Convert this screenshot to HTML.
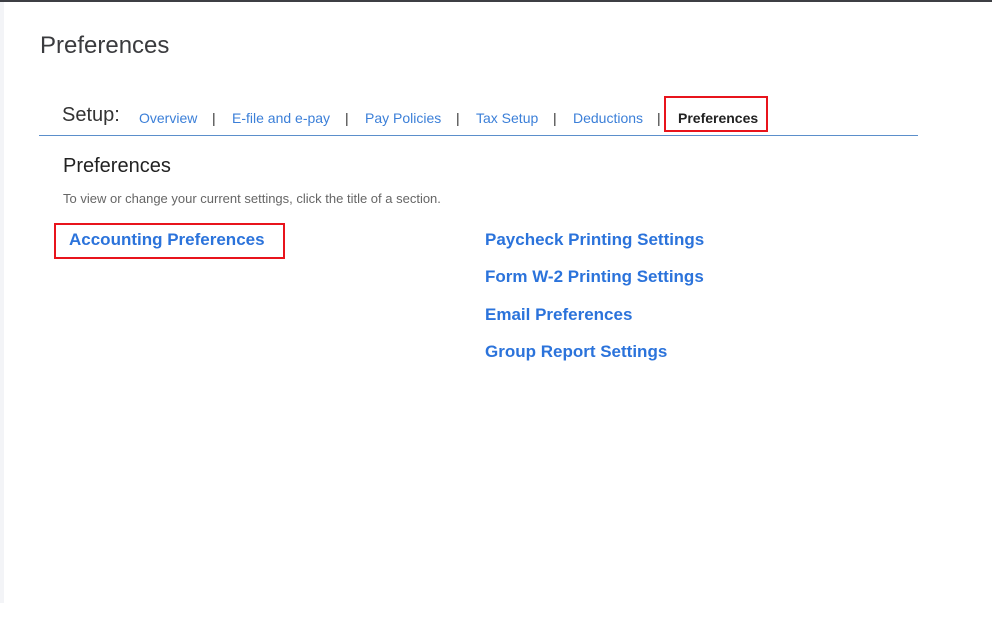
<!DOCTYPE html>
<html><head><meta charset="utf-8"><style>
body{margin:0;width:999px;height:621px;background:#fff;position:relative;overflow:hidden;font-family:"Liberation Sans",Arial,sans-serif}
.a{position:absolute;white-space:nowrap}
.nav{font-size:14px;color:#3b7fd8}
.sep{font-size:14px;color:#333}
.lk{font-size:17px;font-weight:bold;color:#2b73db}
</style></head><body>
<div class="a" style="left:0;top:0;width:992px;height:2px;background:#3d3f44"></div>
<div class="a" style="left:0;top:2px;width:4px;height:601px;background:#f3f4f7"></div>
<div class="a" style="left:40px;top:32px;font-size:24px;color:#3a3b3e">Preferences</div>
<div class="a" style="left:62px;top:104px;font-size:20px;color:#333">Setup:</div>
<div class="a nav" style="left:139px;top:110px">Overview</div>
<div class="a sep" style="left:212px;top:110px">|</div>
<div class="a nav" style="left:232px;top:110px">E-file and e-pay</div>
<div class="a sep" style="left:345px;top:110px">|</div>
<div class="a nav" style="left:365px;top:110px">Pay Policies</div>
<div class="a sep" style="left:456px;top:110px">|</div>
<div class="a nav" style="left:476px;top:110px">Tax Setup</div>
<div class="a sep" style="left:553px;top:110px">|</div>
<div class="a nav" style="left:573px;top:110px">Deductions</div>
<div class="a sep" style="left:657px;top:110px">|</div>
<div class="a" style="left:664px;top:96px;width:104px;height:36px;border:2px solid #e8141c;box-sizing:border-box"></div>
<div class="a" style="left:678px;top:110px;font-size:14px;font-weight:bold;color:#222">Preferences</div>
<div class="a" style="left:39px;top:135px;width:879px;height:1px;background:#5b8fcb"></div>
<div class="a" style="left:63px;top:155px;font-size:20px;color:#222">Preferences</div>
<div class="a" style="left:63px;top:191px;font-size:13px;color:#666">To view or change your current settings, click the title of a section.</div>
<div class="a" style="left:54px;top:223px;width:231px;height:36px;border:2px solid #e8141c;box-sizing:border-box"></div>
<div class="a lk" style="left:69px;top:230px">Accounting Preferences</div>
<div class="a lk" style="left:485px;top:230px">Paycheck Printing Settings</div>
<div class="a lk" style="left:485px;top:267px">Form W-2 Printing Settings</div>
<div class="a lk" style="left:485px;top:305px">Email Preferences</div>
<div class="a lk" style="left:485px;top:342px">Group Report Settings</div>
</body></html>
